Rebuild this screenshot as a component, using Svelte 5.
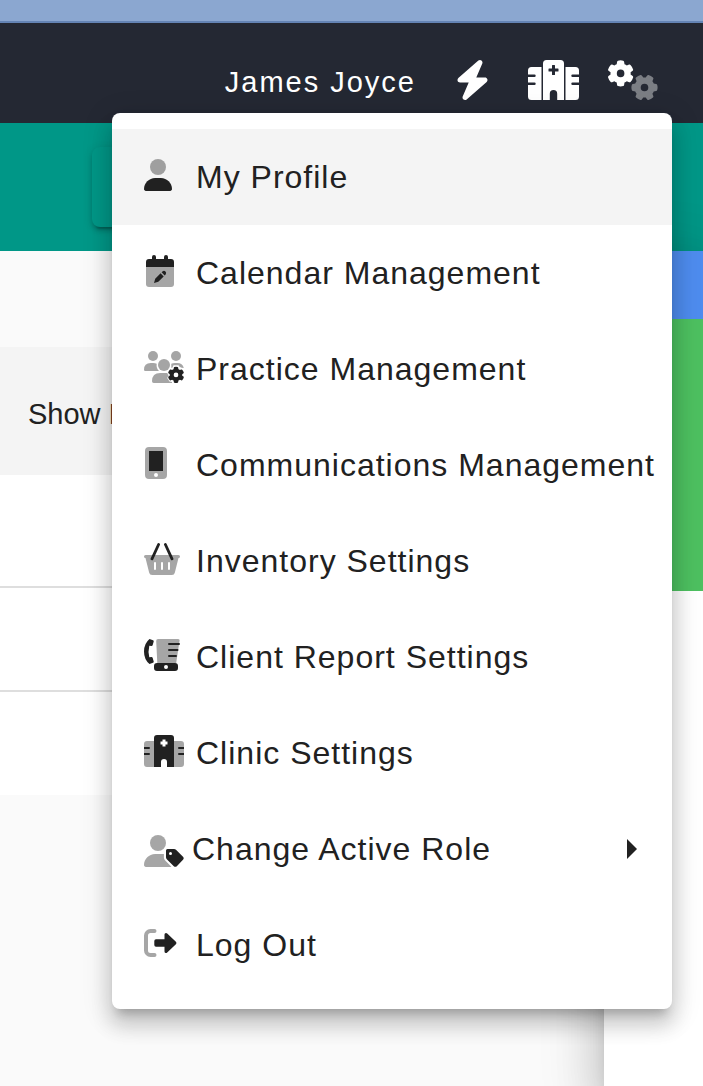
<script>
  const items = [
    { icon: 'profile', label: 'My Profile', active: true },
    { icon: 'calendar', label: 'Calendar Management' },
    { icon: 'practice', label: 'Practice Management' },
    { icon: 'phone', label: 'Communications Management' },
    { icon: 'basket', label: 'Inventory Settings' },
    { icon: 'report', label: 'Client Report Settings' },
    { icon: 'clinic', label: 'Clinic Settings' },
    { icon: 'role', label: 'Change Active Role', submenu: true },
    { icon: 'logout', label: 'Log Out' }
  ];

  // Six-toothed cog centred on the origin, outer radius 13, one tooth pointing up.
  const cog =
    'M-2.600 -12.700Q0 -13.500 2.600 -12.700Q3.400 -12.400 3.500 -11.600L3.900 -9.200Q5.200 -8.700 6.200 -7.900L8.500 -8.800Q9.300 -9.100 9.900 -8.500Q11.800 -6.500 12.500 -4Q12.700 -3.200 12.100 -2.700L10 -1.200Q10.200 0 10 1.200L12.100 2.700Q12.700 3.200 12.500 4Q11.800 6.500 9.900 8.500Q9.300 9.100 8.500 8.800L6.200 7.900Q5.200 8.700 3.900 9.200L3.500 11.600Q3.400 12.400 2.600 12.700Q0 13.500 -2.600 12.700Q-3.400 12.400 -3.500 11.600L-3.900 9.200Q-5.200 8.700 -6.200 7.900L-8.500 8.800Q-9.300 9.100 -9.900 8.500Q-11.800 6.500 -12.500 4Q-12.700 3.200 -12.100 2.700L-10 1.200Q-10.200 0 -10 -1.200L-12.100 -2.700Q-12.700 -3.200 -12.500 -4Q-11.800 -6.500 -9.900 -8.500Q-9.300 -9.100 -8.500 -8.800L-6.200 -7.900Q-5.200 -8.700 -3.900 -9.200L-3.500 -11.600Q-3.400 -12.400 -2.600 -12.700ZM0 -3.800A3.800 3.800 0 0 0 0 3.800A3.800 3.800 0 0 0 0 -3.800Z';
</script>

<div class="page">
  <div class="strip"></div>

  <header>
    <span class="user">James Joyce</span>
    <button class="tool wide" aria-label="Quick actions">
      <svg width="35" height="40" viewBox="0 0 448 512" fill="#fff">
        <path d="M349.4 44.6c5.9-13.7 1.5-29.7-10.6-38.5s-28.6-8-39.9 1.8l-256 224C32.9 240.7 29.3 256.1 34 269.5S49.7 288 64 288H175.5L98.6 467.4c-5.9 13.7-1.5 29.7 10.6 38.5s28.6 8 39.9-1.8l256-224c10-8.8 13.6-22.6 8.9-35s-16.6-20.7-30-20.7H272.5L349.4 44.6z" />
      </svg>
    </button>
    <button class="tool" aria-label="Clinic">
      <svg width="51" height="40" viewBox="0 0 51 40" fill="#fff">
        <path d="M3.500 7H13.500V40H3.500A3.500 3.500 0 0 1 0 36.500V25H6.500A1.200 1.200 0 0 0 6.500 22.600H0V17H6.500A1.200 1.200 0 0 0 6.500 14.600H0V10.500A3.500 3.500 0 0 1 3.500 7Z" />
        <path d="M47.500 7H37.500V40H47.500A3.500 3.500 0 0 0 51 36.500V25H44.500A1.200 1.200 0 0 1 44.500 22.600H51V17H44.500A1.200 1.200 0 0 1 44.500 14.600H51V10.500A3.500 3.500 0 0 0 47.500 7Z" />
        <path fill-rule="evenodd" d="M18.500 0H32.500A3.500 3.500 0 0 1 36 3.500V40H29.200V33.700A3.700 3.700 0 0 0 21.800 33.700V40H15V3.500A3.500 3.500 0 0 1 18.500 0ZM24 5.500V8.500H21A.5 .5 0 0 0 20.500 9V11A.5 .5 0 0 0 21 11.500H24V14.500A.5 .5 0 0 0 24.500 15H26.500A.5 .5 0 0 0 27 14.500V11.500H30A.5 .5 0 0 0 30.500 11V9A.5 .5 0 0 0 30 8.500H27V5.500A.5 .5 0 0 0 26.500 5H24.500A.5 .5 0 0 0 24 5.500Z" />
      </svg>
    </button>
    <button class="tool" aria-label="Settings" aria-haspopup="menu" aria-expanded="true">
      <svg width="50" height="40" viewBox="0 0 50 40" fill="#fff">
        <path fill-rule="evenodd" transform="translate(12.600 13.400)" d={cog} />
        <path fill-rule="evenodd" opacity=".4" transform="translate(36.500 27.500) rotate(90)" d={cog} />
      </svg>
    </button>
  </header>

  <div class="banner"><div class="banner-card"></div></div>

  <div class="body">
    <main>
      <div class="filter">Show I</div>
      <div class="rows">
        <div class="row first"></div>
        <div class="row"></div>
        <div class="row last"></div>
      </div>
    </main>
    <aside>
      <div class="blue"></div>
      <div class="green"></div>
    </aside>
  </div>

  <div class="menu" role="menu">
    {#each items as item}
      <button class="item" class:active={item.active} class:submenu={item.submenu} role="menuitem">
        <span class="icon">
          <svg width="40" height="32" viewBox="0 0 40 32" fill="#212121" aria-hidden="true">
            {#if item.icon === 'profile'}
              <circle class="soft" cx="14" cy="8" r="8" />
              <path d="M11.100 19C5 19 0 24 0 30.100 0 31.200 .8 32 1.900 32H26.100C27.200 32 28 31.200 28 30.100 28 24 23 19 16.900 19Z" />
            {:else if item.icon === 'calendar'}
              <path class="soft" d="M2 12H30V29A3 3 0 0 1 27 32H5A3 3 0 0 1 2 29Z" />
              <path d="M8 2A2 2 0 0 1 12 2V4H20V2A2 2 0 0 1 24 2V4H27A3 3 0 0 1 30 7V12H2V7A3 3 0 0 1 5 4H8Z" />
              <path d="M10 28L11.200 23.700 16.600 18.300 19.700 21.400 14.300 26.800ZM17.600 17.300L18.800 16.200A2.200 2.200 0 0 1 21.800 19.200L20.700 20.400Z" />
            {:else if item.icon === 'practice'}
              <g class="soft">
                <circle cx="9" cy="5" r="5" />
                <circle cx="32" cy="5" r="5" />
                <circle cx="20" cy="14" r="6" />
                <path d="M6.700 12H9.300Q11.100 12 12.700 12.800Q12 17 15 20H1.300Q0 20 0 18.700Q0 12 6.700 12Z" />
                <path d="M27.300 12.800Q29 12 30.700 12H33.300Q38.500 12 39.800 17L37.500 16.700 35.500 15.800 34.500 14.200H29.500L28.500 16.500 27.300 17Z" />
                <path d="M16.300 22H23.200L24.500 24.500 23.200 27 25.500 30.500 28 31V32H9.700Q8 32 8 30.300Q8 22 16.300 22Z" />
              </g>
              <path fill-rule="evenodd" transform="translate(32 23.900) scale(.62)" d={cog} />
            {:else if item.icon === 'phone'}
              <path class="soft" fill-rule="evenodd" d="M5 0H19A4 4 0 0 1 23 4V28A4 4 0 0 1 19 32H5A4 4 0 0 1 1 28V4A4 4 0 0 1 5 0ZM5 4V24H19V4ZM12 26A2 2 0 0 0 12 30A2 2 0 0 0 12 26Z" />
              <rect x="5" y="4" width="14" height="20" />
            {:else if item.icon === 'basket'}
              <path class="soft" fill-rule="evenodd" d="M1.500 12H34.500A1.500 1.500 0 0 1 34.500 15L30.800 29.700A3 3 0 0 1 27.900 32H8.100A3 3 0 0 1 5.200 29.700L1.500 15A1.500 1.500 0 0 1 1.500 12ZM10 20V26A1 1 0 0 0 12 26V20A1 1 0 0 0 10 20ZM17 20V26A1 1 0 0 0 19 26V20A1 1 0 0 0 17 20ZM24 20V26A1 1 0 0 0 26 26V20A1 1 0 0 0 24 20Z" />
              <path d="M14.600 1.500L8 15.800M21.400 1.500L28 15.800" fill="none" stroke="#212121" stroke-width="2.800" stroke-linecap="round" />
            {:else if item.icon === 'report'}
              <path d="M5.500 0L9 1.200Q10 1.600 9.700 2.600L8.700 6Q8.400 7 7.400 6.900L5.300 6.700Q3.800 12.500 5.300 18.300L7.400 18.100Q8.400 18 8.700 19L9.700 22.400Q10 23.400 9 23.800L5.500 25Q0 20.500 0 12.500Q0 4.500 5.500 0Z" />
              <path class="soft" d="M14 0H34A1.500 1.500 0 0 1 35.500 2L32.200 24H13.300L12.200 2A2 2 0 0 1 14 0Z" />
              <path d="M25 5H35M25 11H33.500M25 17H32" fill="none" stroke="#212121" stroke-width="2" stroke-linecap="round" />
              <path fill-rule="evenodd" d="M13 24H31A3 3 0 0 1 34 27V29A3 3 0 0 1 31 32H13A3 3 0 0 1 10 29V27A3 3 0 0 1 13 24ZM22 26A2 2 0 0 0 22 30A2 2 0 0 0 22 26Z" />
            {:else if item.icon === 'clinic'}
              <path class="soft" d="M3 6H10V32H3A3 3 0 0 1 0 29V9A3 3 0 0 1 3 6ZM30 6H37A3 3 0 0 1 40 9V29A3 3 0 0 1 37 32H30Z" />
              <path d="M0 12H5A1 1 0 0 1 5 14H0ZM0 18H5A1 1 0 0 1 5 20H0ZM40 12H35A1 1 0 0 0 35 14H40ZM40 18H35A1 1 0 0 0 35 20H40Z" />
              <path fill-rule="evenodd" d="M13 0H27A3 3 0 0 1 30 3V32H23V27A3 3 0 0 0 17 27V32H10V3A3 3 0 0 1 13 0ZM18.500 4.500V6.500H16.500V9.500H18.500V11.500H21.500V9.500H23.500V6.500H21.500V4.500Z" />
            {:else if item.icon === 'role'}
              <circle class="soft" cx="14" cy="8" r="8" />
              <path class="soft" d="M11.100 19H19.900V22.500Q19.900 24.200 21 25.300L27.400 31.800Q26.900 32 26.100 32H1.900C.8 32 0 31.200 0 30.100 0 24 5 19 11.100 19Z" />
              <path fill-rule="evenodd" d="M23.500 14H30Q31.200 14 32 14.800L39 21.800Q40.400 23.300 39 24.800L32.800 31.200Q31.300 32.500 29.800 31.200L22.800 24.200Q22 23.400 22 22.200V15.500Q22 14 23.500 14ZM26.500 17.100A1.500 1.500 0 0 0 26.500 20.100A1.500 1.500 0 0 0 26.500 17.100Z" />
            {:else}
              <path d="M10.500 4H6.500A4.500 4.500 0 0 0 2 8.500V23.500A4.500 4.500 0 0 0 6.500 28H10.500" fill="none" stroke="#a6a6a6" stroke-width="4" stroke-linecap="round" />
              <path d="M12 12.300H20.500V7.500Q20.500 5.900 22 5.900Q22.700 5.900 23.200 6.400L31.900 14.800Q33.100 16 31.900 17.200L23.200 25.600Q22.700 26.100 22 26.100Q20.500 26.100 20.500 24.500V19.700H12Q10.300 19.700 10.300 18V14Q10.300 12.300 12 12.300Z" />
            {/if}
          </svg>
        </span>
        <span class="label">{item.label}</span>
        {#if item.submenu}
          <svg class="arrow" width="10" height="20" viewBox="0 0 10 20" fill="#212121" aria-hidden="true">
            <path d="M0 0L10 10 0 20Z" />
          </svg>
        {/if}
      </button>
    {/each}
  </div>
</div>

<style>
  :global(body) {
    margin: 0;
  }
  .page {
    position: relative;
    display: flex;
    flex-direction: column;
    min-height: 100vh;
    overflow: hidden;
    background: #fafafa;
    color: #212121;
    font-family: 'Liberation Sans', Arial, sans-serif;
    font-size: 29px;
  }
  button {
    border: 0;
    margin: 0;
    padding: 0;
    background: none;
    color: inherit;
    font: inherit;
    letter-spacing: inherit;
    cursor: pointer;
  }
  svg {
    display: block;
    flex: none;
  }
  .strip {
    height: 21px;
    background: #8ba7d0;
    border-bottom: 2px solid #6484b5;
  }
  header {
    box-sizing: border-box;
    height: 100px;
    padding: 14px 45px 0 0;
    display: flex;
    align-items: center;
    justify-content: flex-end;
    gap: 30px;
    background: #242833;
    color: #fff;
  }
  .user {
    padding-top: 4px;
    letter-spacing: 2px;
  }
  .tool {
    width: 50px;
    display: flex;
    justify-content: center;
  }
  .wide {
    width: 52px;
  }
  .banner {
    padding: 24px 92px;
    background: #009787;
  }
  .banner-card {
    height: 80px;
    border-radius: 8px;
    background: #009787;
    box-shadow:
      0 6px 2px -4px rgba(0, 0, 0, 0.2),
      0 4px 4px rgba(0, 0, 0, 0.14),
      0 2px 10px rgba(0, 0, 0, 0.12);
  }
  .body {
    flex: 1;
    display: flex;
  }
  main {
    flex: 1;
    padding-top: 96px;
  }
  .filter {
    height: 128px;
    padding: 0 28px;
    line-height: 134px;
    background: #f4f4f4;
    white-space: nowrap;
  }
  .rows {
    background: #fff;
  }
  .row {
    height: 102px;
    border-bottom: 2px solid #dedede;
  }
  .row.first {
    height: 111px;
  }
  .row.last {
    height: 103px;
    border-bottom: 0;
  }
  aside {
    width: 99px;
    background: #fff;
    box-shadow:
      0 16px 20px -10px rgba(0, 0, 0, 0.2),
      0 32px 48px 4px rgba(0, 0, 0, 0.14),
      0 12px 60px 10px rgba(0, 0, 0, 0.12);
  }
  .blue {
    height: 68px;
    background: #4e8cee;
  }
  .green {
    height: 272px;
    background: #4dc060;
  }
  .menu {
    position: absolute;
    top: 113px;
    left: 112px;
    right: 31px;
    padding: 16px 0;
    border-radius: 8px;
    background: #fff;
    font-size: 32px;
    letter-spacing: 1px;
    box-shadow:
      0 10px 10px -6px rgba(0, 0, 0, 0.2),
      0 16px 20px 2px rgba(0, 0, 0, 0.14),
      0 6px 28px 4px rgba(0, 0, 0, 0.12);
  }
  .item {
    width: 100%;
    height: 96px;
    padding: 0 32px;
    display: flex;
    align-items: center;
    text-align: left;
  }
  .active {
    background: #f4f4f4;
  }
  .icon {
    width: 52px;
    height: 36px;
    flex: none;
    display: flex;
    align-items: flex-start;
  }
  .submenu .icon {
    width: 48px;
    align-items: flex-end;
  }
  .soft {
    fill: #212121;
    opacity: 0.4;
  }
  .label {
    flex: 1;
    white-space: nowrap;
  }
  .arrow {
    margin-right: 3px;
  }
</style>
